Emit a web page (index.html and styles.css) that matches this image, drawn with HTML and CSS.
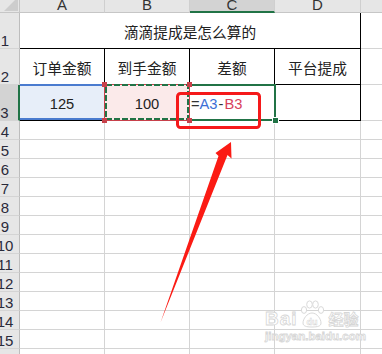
FILE: index.html
```html
<!DOCTYPE html>
<html lang="zh-CN">
<head>
<meta charset="utf-8">
<title>滴滴提成是怎么算的</title>
<link rel="stylesheet" href="styles.css">
</head>
<body>
<div class="page">
  <div class="sheet">
    <div class="corner"></div>
    <div class="ch">A</div><div class="ch">B</div><div class="ch ch-sel">C</div><div class="ch">D</div><div class="ch">E</div>

    <div class="rh">1</div>
    <div class="c bk title">滴滴提成是怎么算的</div>
    <div class="c"></div>

    <div class="rh">2</div>
    <div class="c bk">订单金额</div><div class="c bk">到手金额</div><div class="c bk">差额</div><div class="c bk">平台提成</div>
    <div class="c"></div>

    <div class="rh rh-sel">3</div>
    <div class="c bk refA">125</div>
    <div class="c bk refB">100
      <span class="rb"></span>
      <svg class="marquee" width="84" height="36" viewBox="0 0 84 36"><rect x="1" y="1" width="82" height="34" fill="none" stroke="#217346" stroke-width="2" stroke-dasharray="6 2"/></svg>
      <span class="sq tl"></span><span class="sq tr"></span><span class="sq bl"></span><span class="sq br"></span>
    </div>
    <div class="c bk active formula"><span class="op">=</span><span class="ra">A3</span><span class="op minus">-</span><span class="rbc">B3</span>
      <span class="sel"></span><span class="handle"></span>
    </div>
    <div class="c bk"></div>
    <div class="c"></div>

    <div class="rh">4</div><div class="c"></div><div class="c"></div><div class="c"></div><div class="c"></div><div class="c"></div>
    <div class="rh">5</div><div class="c"></div><div class="c"></div><div class="c"></div><div class="c"></div><div class="c"></div>
    <div class="rh">6</div><div class="c"></div><div class="c"></div><div class="c"></div><div class="c"></div><div class="c"></div>
    <div class="rh">7</div><div class="c"></div><div class="c"></div><div class="c"></div><div class="c"></div><div class="c"></div>
    <div class="rh">8</div><div class="c"></div><div class="c"></div><div class="c"></div><div class="c"></div><div class="c"></div>
    <div class="rh">9</div><div class="c"></div><div class="c"></div><div class="c"></div><div class="c"></div><div class="c"></div>
    <div class="rh">10</div><div class="c"></div><div class="c"></div><div class="c"></div><div class="c"></div><div class="c"></div>
    <div class="rh">11</div><div class="c"></div><div class="c"></div><div class="c"></div><div class="c"></div><div class="c"></div>
    <div class="rh">12</div><div class="c"></div><div class="c"></div><div class="c"></div><div class="c"></div><div class="c"></div>
    <div class="rh">13</div><div class="c"></div><div class="c"></div><div class="c"></div><div class="c"></div><div class="c"></div>
    <div class="rh">14</div><div class="c"></div><div class="c"></div><div class="c"></div><div class="c"></div><div class="c"></div>
    <div class="rh">15</div><div class="c"></div><div class="c"></div><div class="c"></div><div class="c"></div><div class="c"></div>
    <div class="rh">16</div><div class="c"></div><div class="c"></div><div class="c"></div><div class="c"></div><div class="c"></div>
  </div>

  <svg class="annot" width="382" height="354" viewBox="0 0 382 354">
    <rect x="177.5" y="93.5" width="82" height="34" rx="3" fill="none" stroke="#f5191a" stroke-width="3"/>
    <polygon points="231,142 231.5,158.5 227.5,155 160.5,322.5 218.5,156 215.5,153" fill="#fb1b14"/>
  </svg>

  <div class="watermark">
    <div class="wm-top">
      <span class="wm-bai">Bai</span>
      <svg class="paw" width="24" height="28" viewBox="0 0 24 28">
        <ellipse cx="4" cy="10" rx="2.6" ry="3.4" fill="#fff" stroke="#d9d9d9"/>
        <ellipse cx="9.5" cy="4.5" rx="2.8" ry="3.6" fill="#fff" stroke="#d9d9d9"/>
        <ellipse cx="15.5" cy="4.5" rx="2.8" ry="3.6" fill="#fff" stroke="#d9d9d9"/>
        <ellipse cx="21" cy="10" rx="2.6" ry="3.4" fill="#fff" stroke="#d9d9d9"/>
        <path d="M12 13 C7 13 3 19 3 23 C3 26 6 27 12 27 C18 27 21 26 21 23 C21 19 17 13 12 13 Z" fill="#fff" stroke="#d9d9d9"/>
        <text x="12" y="25" text-anchor="middle" class="wm-du">du</text>
      </svg>
      <span class="wm-jy">经验</span>
    </div>
    <div class="wm-url">jingyan.baidu.com</div>
  </div>
</div>
</body>
</html>
```

FILE: styles.css
```css
body {
  margin: 0;
  background: #fff;
  overflow: hidden;
  font-family: "Liberation Sans", "Noto Sans CJK SC", sans-serif;
  color: #222;
}

.page {
  position: relative;
  width: 382px;
  height: 354px;
  overflow: hidden;
}

.sheet {
  display: grid;
  grid-template-columns: 29px 85px 85px 85px 86px 86px;
  grid-template-rows: 13px 36px 36px 36px repeat(13, 19px);
  margin-left: -9px;
}

.sheet > div {
  box-sizing: border-box;
}

.corner {
  background: #e6e6e6;
  border-right: 1px solid #c6c6c6;
  border-bottom: 1px solid #c6c6c6;
  display: flex;
  justify-content: flex-end;
  align-items: flex-end;
  overflow: hidden;
  padding: 0 1px 1px 0;
}

.corner::after {
  content: "";
  flex: none;
  border-left: 14px solid transparent;
  border-bottom: 14px solid #cdcdcd;
}

.ch {
  background: #e6e6e6;
  border-right: 1px solid #cfcfcf;
  border-bottom: 1px solid #c6c6c6;
  text-align: center;
  font-size: 15px;
  line-height: 10px;
  color: #333;
  overflow: hidden;
}

.ch-sel {
  background: #d3d3d3;
  border-bottom: 2px solid #217346;
}

.rh {
  background: #e6e6e6;
  border-right: 1px solid #bdbdbd;
  border-bottom: 1px solid #d4d4d4;
  display: flex;
  align-items: flex-end;
  justify-content: center;
  font-size: 15px;
  line-height: 15px;
  color: #2a2a3a;
  overflow: hidden;
}

.rh-sel {
  background: #d3d3d3;
  border-right: 2px solid #217346;
}

.c {
  border-right: 1px solid #d4d4d4;
  border-bottom: 1px solid #d4d4d4;
  display: flex;
  align-items: center;
  justify-content: center;
  font-size: 14.7px;
  padding-top: 2px;
}

.bk {
  border-right-color: #000;
  border-bottom-color: #000;
}

.title {
  grid-column: span 4;
}

/* A3 reference highlight */
.refA {
  position: relative;
  background: #e7eef9;
}

.refA::before {
  content: "";
  position: absolute;
  left: 0;
  right: -1px;
  top: -1px;
  bottom: 0;
  border-top: 2px solid #4a7bcf;
  border-bottom: 2px solid #4a7bcf;
  z-index: 2;
}

/* B3 reference highlight + copy marquee */
.refB {
  position: relative;
  background: #fbeaea;
}

.rb {
  position: absolute;
  inset: -1px;
  border: 1px solid #c8414b;
  z-index: 2;
}

.marquee {
  position: absolute;
  left: 0;
  top: -1px;
  z-index: 3;
}

.sq {
  position: absolute;
  width: 5px;
  height: 5px;
  background: #c8414b;
  z-index: 4;
}

.tl { left: -3px; top: -3px; }
.tr { right: -3px; top: -3px; }
.bl { left: -3px; bottom: -3px; }
.br { right: -3px; bottom: -3px; }

/* C3 active cell */
.active {
  position: relative;
}

.formula {
  justify-content: flex-start;
  padding-left: 1px;
}

.op { color: #333; }
.ra { color: #3c6fd6; }
.rbc { color: #d8405c; }

.minus {
  margin: 0 1px;
}

.sel {
  position: absolute;
  top: -1px;
  left: -1px;
  right: -2px;
  bottom: -1px;
  border: 2px solid #217346;
  border-left: none;
  z-index: 2;
}

.handle {
  position: absolute;
  right: -5px;
  bottom: -4px;
  width: 5px;
  height: 5px;
  background: #217346;
  border: 1px solid #fff;
  z-index: 4;
}

/* annotation */
.annot {
  position: absolute;
  left: 0;
  top: 0;
  z-index: 10;
}

/* watermark */
.watermark {
  position: absolute;
  left: 265px;
  top: 298px;
  z-index: 9;
  display: flex;
  flex-direction: column;
  align-items: flex-start;
}

.wm-top {
  display: flex;
  align-items: flex-end;
  gap: 2px;
  height: 30px;
}

.wm-bai,
.wm-jy,
.wm-url {
  color: #fff;
  -webkit-text-stroke: 0.8px #d6d6d6;
  font-weight: bold;
}

.wm-bai {
  font-family: "Liberation Sans", sans-serif;
  font-size: 19px;
  line-height: 19px;
  letter-spacing: 1px;
}

.wm-jy {
  font-family: "Noto Sans CJK SC", sans-serif;
  font-size: 15px;
  line-height: 18px;
  margin-left: 3px;
}

.wm-du {
  font-family: "Liberation Sans", sans-serif;
  font-size: 9px;
  font-weight: bold;
  fill: #fff;
  stroke: #d6d6d6;
  stroke-width: 0.5px;
}

.wm-url {
  font-family: "Liberation Sans", sans-serif;
  font-size: 11.5px;
  line-height: 14px;
  margin-top: 1px;
}
```
